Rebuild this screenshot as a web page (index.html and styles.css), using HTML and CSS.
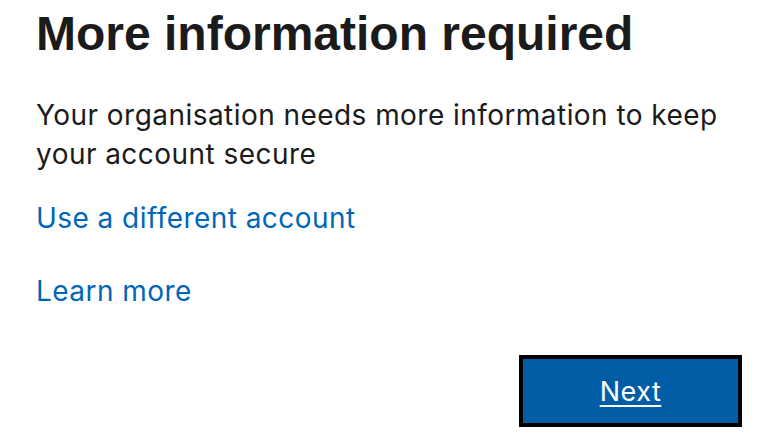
FILE: index.html
```html
<!DOCTYPE html>
<html lang="en">
<head>
<meta charset="utf-8">
<title>More information required</title>
<link rel="stylesheet" href="styles.css">
</head>
<body>
<main class="page">
  <h1 class="title">More information required</h1>
  <p class="desc">Your organisation needs more information to keep your account secure</p>
  <a class="link link-first" href="#">Use a different account</a>
  <a class="link link-second" href="#">Learn more</a>
  <div class="actions">
    <button class="btn-next" type="button"><span>Next</span></button>
  </div>
</main>
</body>
</html>
```

FILE: styles.css
```css
html, body {
  margin: 0;
  padding: 0;
  background: #ffffff;
}

.page {
  width: 784px;
  height: 442px;
  box-sizing: border-box;
  padding: 6px 42px 0 36px;
  display: flex;
  flex-direction: column;
  align-items: flex-start;
  font-family: Inter, "Noto Sans", sans-serif;
  color: #1b1b1b;
}

.title {
  margin: 0;
  font-family: "Liberation Sans", Arial, sans-serif;
  font-weight: 700;
  font-size: 48px;
  line-height: 56px;
  color: #1b1b1b;
  white-space: nowrap;
}

.desc {
  margin: 34px 0 0 0;
  font-size: 28px;
  line-height: 39px;
  letter-spacing: 0.45px;
  width: 720px;
}

.link {
  display: block;
  font-size: 28px;
  line-height: 38px;
  letter-spacing: 0.45px;
  color: #0067b8;
  text-decoration: none;
}

.link-first {
  margin-top: 25px;
}

.link-second {
  margin-top: 35px;
}

.actions {
  align-self: stretch;
  display: flex;
  justify-content: flex-end;
  margin-top: 45px;
}

.btn-next {
  width: 223px;
  height: 72px;
  box-sizing: border-box;
  border: 4px solid #000000;
  background: #005da6;
  color: #ffffff;
  font-family: Inter, "Noto Sans", sans-serif;
  font-size: 27px;
  letter-spacing: 0.5px;
  padding: 0;
  display: flex;
  align-items: center;
  justify-content: center;
}

.btn-next span {
  text-decoration: underline;
  text-underline-offset: 4px;
  text-decoration-thickness: 2px;
}
```
